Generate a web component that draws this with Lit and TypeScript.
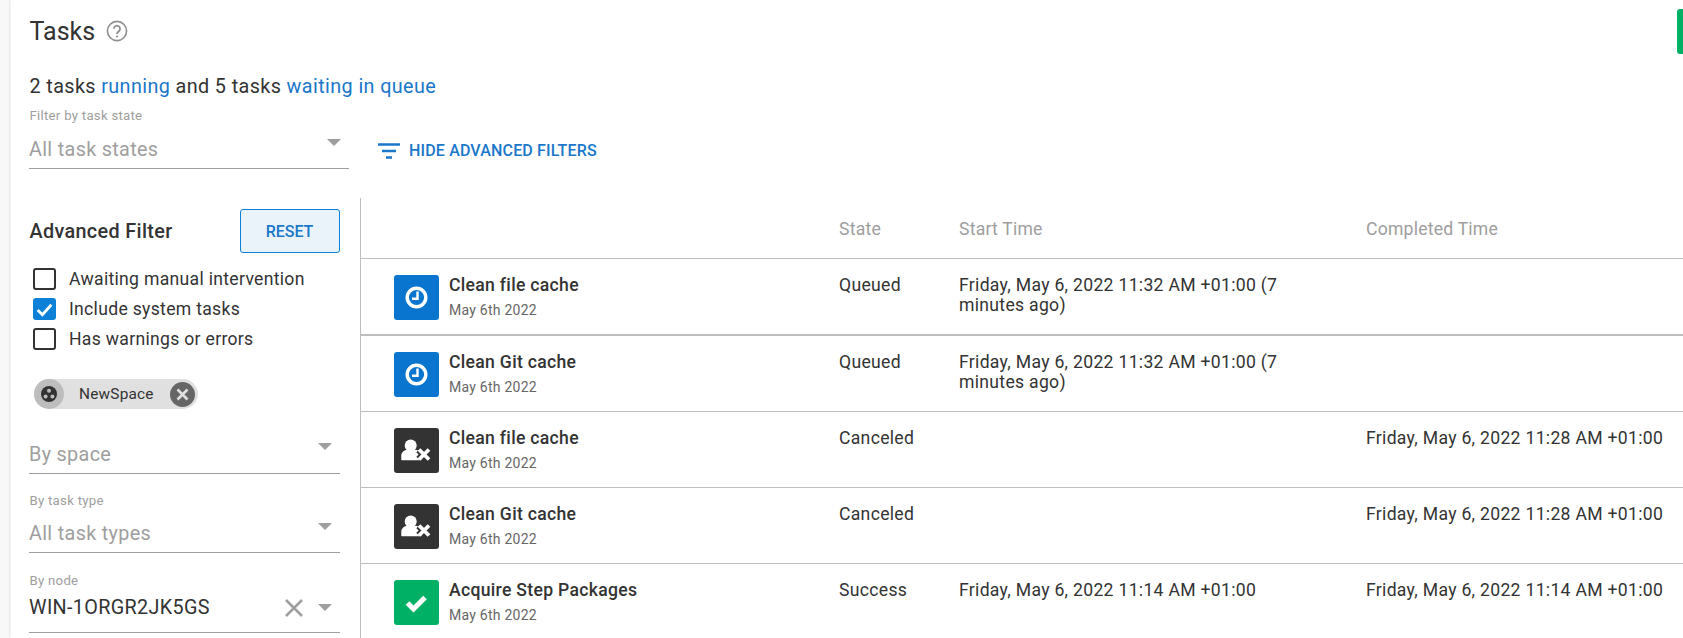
import { LitElement, html, css, svg } from "lit";
import { customElement } from "lit/decorators.js";

const arrow = html`<svg class="arrow" width="14" height="7" viewBox="0 0 14 7"><path d="M0 0h14L7 7z" fill="#9e9e9e"/></svg>`;

const clock = svg`<circle cx="22.5" cy="22.5" r="9.3" fill="none" stroke="#fff" stroke-width="3.400"/><path d="M23.500 16.500v7.200h-5.500" fill="none" stroke="#fff" stroke-width="2.400"/>`;
const cancelled = svg`<circle cx="16.700" cy="17.500" r="6" fill="#fff"/><path d="M8 31.500v-3.500c0-3 2.500-5.500 5.500-5.500h7c3 0 5 2 5 5v4z" fill="#fff" stroke="#fff" stroke-linejoin="round" stroke-width="1.500"/><path d="M25 21.500l10 10M35 21.500l-10 10" stroke="#333" stroke-width="7.500" fill="none"/><path d="M25 21.500l10 10M35 21.500l-10 10" stroke="#fff" stroke-width="3.800" fill="none"/>`;
const check = svg`<path d="M13.500 23l6 6L31 17.500" fill="none" stroke="#fff" stroke-width="5"/>`;

interface Row { icon: string; title: string; state: string; start: string; done: string; first?: boolean }
const T1 = "Friday, May 6, 2022 11:32 AM +01:00 (7 minutes ago)";
const T2 = "Friday, May 6, 2022 11:28 AM +01:00";
const T3 = "Friday, May 6, 2022 11:14 AM +01:00";
const rows: Row[] = [
  { icon: "queued", title: "Clean file cache", state: "Queued", start: T1, done: "", first: true },
  { icon: "queued", title: "Clean Git cache", state: "Queued", start: T1, done: "" },
  { icon: "cancel", title: "Clean file cache", state: "Canceled", start: "", done: T2 },
  { icon: "cancel", title: "Clean Git cache", state: "Canceled", start: "", done: T2 },
  { icon: "ok", title: "Acquire Step Packages", state: "Success", start: T3, done: T3 },
];

@customElement("app-root")
export class AppRoot extends LitElement {
  static styles = css`
    :host { display: block; height: 638px; overflow: hidden; position: relative; background: #fff;
      font-family: Roboto, "Noto Sans", sans-serif; color: #333; }
    * { box-sizing: border-box; }
    .page { display: flex; height: 638px; }
    .gutter { width: 9px; flex: none; background: #f8f8f8; box-shadow: 1px 0 2px rgba(0,0,0,.12); }
    .main { flex: 1; min-width: 0; padding-left: 20px; }
    .title-row { display: flex; align-items: center; gap: 11px; height: 30px; margin-top: 16px; padding-left: .5px; }
    h1 { font-size: 25px; font-weight: 400; margin: 0; }
    .summary { height: 30px; line-height: 30px; margin-top: 26px; padding-left: .5px; font-size: 19.800px; letter-spacing: .39px; white-space: nowrap; }
    a { color: #1a77ca; text-decoration: none; }
    .top-filter { display: flex; align-items: flex-start; height: 90px; margin-top: 6px; }
    .state-field { width: 320px; }
    .label { height: 16px; line-height: 16px; padding-left: .5px; font-size: 13.200px; color: #9e9e9e; letter-spacing: .27px; white-space: nowrap; }
    .control { display: flex; align-items: center; justify-content: space-between; height: 39px; border-bottom: 1px solid #9e9e9e;
      font-size: 19.800px; color: #9e9e9e; letter-spacing: .33px; padding-right: 8px; }
    .state-field .control { height: 45px; padding-top: 7px; }
    .arrow { margin-top: -15px; flex: none; }
    .hide { display: flex; align-items: center; gap: 9px; margin: 33px 0 0 29px; color: #1a77ca; font-size: 16px; font-weight: 500; letter-spacing: .16px; white-space: nowrap; }
    .body { display: flex; height: 440px; }
    aside { width: 332px; flex: none; border-right: 1px solid #bdbdbd; padding: 11px 20px 0 0; }
    .adv-head { display: flex; align-items: center; justify-content: space-between; height: 44px; }
    h2 { font-size: 19.800px; font-weight: 500; letter-spacing: .35px; margin: 0; padding-left: .5px; white-space: nowrap; }
    .reset { display: flex; align-items: center; justify-content: center; width: 100px; height: 44px; border: 1px solid #0d80d8; border-radius: 3px;
      background: #ebf3fa; color: #1a77ca; font-size: 16px; font-weight: 500; padding-right: 1px; }
    .checks { margin-top: 11px; padding-left: 4px; }
    .check { display: flex; align-items: center; gap: 13.500px; height: 30px; font-size: 17.600px; letter-spacing: .3px; white-space: nowrap; }
    .box { width: 22.500px; height: 22.500px; flex: none; border: 2.500px solid #333; border-radius: 3px; display: flex; align-items: center; justify-content: center; }
    .box.on { background: #0d80d8; border: none; }
    .chip { display: inline-flex; align-items: center; width: 164px; height: 30px; margin: 25px 0 0 5px; border-radius: 15px; background: #e0e0e0;
      font-size: 15.400px; letter-spacing: .2px; color: #333; vertical-align: top; }
    .avatar { width: 30px; height: 30px; border-radius: 50%; background: #bdbdbd; display: flex; align-items: center; justify-content: center; flex: none; }
    .chip span { margin-left: 15px; flex: 1; }
    .chip svg.del { margin-right: 3px; }
    .space { margin-top: 26px; }
    .type { margin-top: 19px; }
    .type .control { height: 44px; padding-top: 6px; }
    .node { margin-top: 20px; }
    .node .control { height: 44px; color: #333; padding-bottom: 6px; }
    .node .arrow { margin-top: 0; }
    .node .tools { display: flex; align-items: center; gap: 15px; }
    .table { flex: 1; min-width: 0; }
    .row { display: grid; grid-template-columns: 478px 120px 407px 1fr; border-bottom: 1px solid #bdbdbd; }
    .head { height: 61px; align-items: center; color: #9e9e9e; font-size: 17.600px; letter-spacing: .22px; padding-top: 2px; }
    .task { height: 76px; padding-top: 16px; font-size: 17.600px; letter-spacing: .3px; line-height: 20px; }
    .task.first { height: 77px; border-bottom-width: 2px; }
    .who { display: flex; gap: 10px; padding-left: 33px; }
    .ico { width: 45px; height: 45px; flex: none; border-radius: 3px; display: block; }
    .queued { background: #0a75cf; }
    .cancel { background: #333; }
    .ok { background: #00b065; }
    .name { font-weight: 500; line-height: 20px; white-space: nowrap; }
    .date { font-size: 14px; color: #666; line-height: 16px; margin-top: 7px; letter-spacing: .25px; white-space: nowrap; }
    .start { padding-right: 70px; }
    .flag { position: absolute; right: 0; top: 9px; width: 6px; height: 45px; background: #00b065; border-radius: 3px 0 0 3px; }
  `;

  private box(on: boolean) {
    return html`<div class="box ${on ? "on" : ""}">${on
      ? html`<svg width="19" height="19" viewBox="0 0 18 18"><path d="M2.500 9.500l4.500 4.500 8.500-9.500" fill="none" stroke="#fff" stroke-width="2.600"/></svg>`
      : ""}</div>`;
  }

  render() {
    return html`
      <div class="page">
        <div class="gutter"></div>
        <div class="main">
          <div class="title-row">
            <h1>Tasks</h1>
            <svg width="22" height="22" viewBox="0 0 20 20"><circle cx="10" cy="10" r="8.700" fill="none" stroke="#8f8f8f" stroke-width="1.500"/><path d="M7.200 8a2.800 2.800 0 1 1 4.500 2.200c-1 .8-1.700 1.200-1.700 2.600" fill="none" stroke="#8f8f8f" stroke-width="1.600"/><circle cx="10" cy="15" r="1" fill="#8f8f8f"/></svg>
          </div>
          <div class="summary">2 tasks <a>running</a> and 5 tasks <a>waiting in queue</a></div>
          <div class="top-filter">
            <div class="state-field">
              <div class="label">Filter by task state</div>
              <div class="control"><span>All task states</span>${arrow}</div>
            </div>
            <div class="hide">
              <svg width="22" height="18" viewBox="0 0 22 18"><path d="M0 2.500h22M4 9h14M8 15.500h6" stroke="#1a77ca" stroke-width="2.400" fill="none"/></svg>
              HIDE ADVANCED FILTERS
            </div>
          </div>
          <div class="body">
            <aside>
              <div class="adv-head"><h2>Advanced Filter</h2><div class="reset">RESET</div></div>
              <div class="checks">
                <div class="check">${this.box(false)}Awaiting manual intervention</div>
                <div class="check">${this.box(true)}Include system tasks</div>
                <div class="check">${this.box(false)}Has warnings or errors</div>
              </div>
              <div class="chip">
                <div class="avatar"><svg width="16" height="16" viewBox="0 0 16 16"><circle cx="8" cy="8" r="8" fill="#333"/><circle cx="8" cy="4.800" r="2" fill="#bdbdbd"/><circle cx="4.600" cy="10.400" r="2" fill="#bdbdbd"/><circle cx="11.400" cy="10.400" r="2" fill="#bdbdbd"/></svg></div>
                <span>NewSpace</span>
                <svg class="del" width="25" height="25" viewBox="0 0 25 25"><circle cx="12.500" cy="12.500" r="12.500" fill="#666"/><path d="M7.500 7.500l10 10M17.500 7.500l-10 10" stroke="#e0e0e0" stroke-width="2.600"/></svg>
              </div>
              <div class="space"><div class="control"><span>By space</span>${arrow}</div></div>
              <div class="type"><div class="label">By task type</div><div class="control"><span>All task types</span>${arrow}</div></div>
              <div class="node"><div class="label">By node</div><div class="control"><span>WIN-1ORGR2JK5GS</span>
                <div class="tools"><svg width="18" height="18" viewBox="0 0 18 18"><path d="M1 1l16 16M17 1L1 17" stroke="#9e9e9e" stroke-width="2.500"/></svg>${arrow}</div></div></div>
            </aside>
            <div class="table">
              <div class="row head"><div></div><div>State</div><div>Start Time</div><div>Completed Time</div></div>
              ${rows.map((r) => html`
                <div class="row task ${r.first ? "first" : ""}">
                  <div class="who">
                    <svg class="ico ${r.icon}" viewBox="0 0 45 45">${r.icon === "queued" ? clock : r.icon === "cancel" ? cancelled : check}</svg>
                    <div><div class="name">${r.title}</div><div class="date">May 6th 2022</div></div>
                  </div>
                  <div>${r.state}</div>
                  <div class="start">${r.start}</div>
                  <div>${r.done}</div>
                </div>`)}
            </div>
          </div>
        </div>
      </div>
      <div class="flag"></div>
    `;
  }
}
